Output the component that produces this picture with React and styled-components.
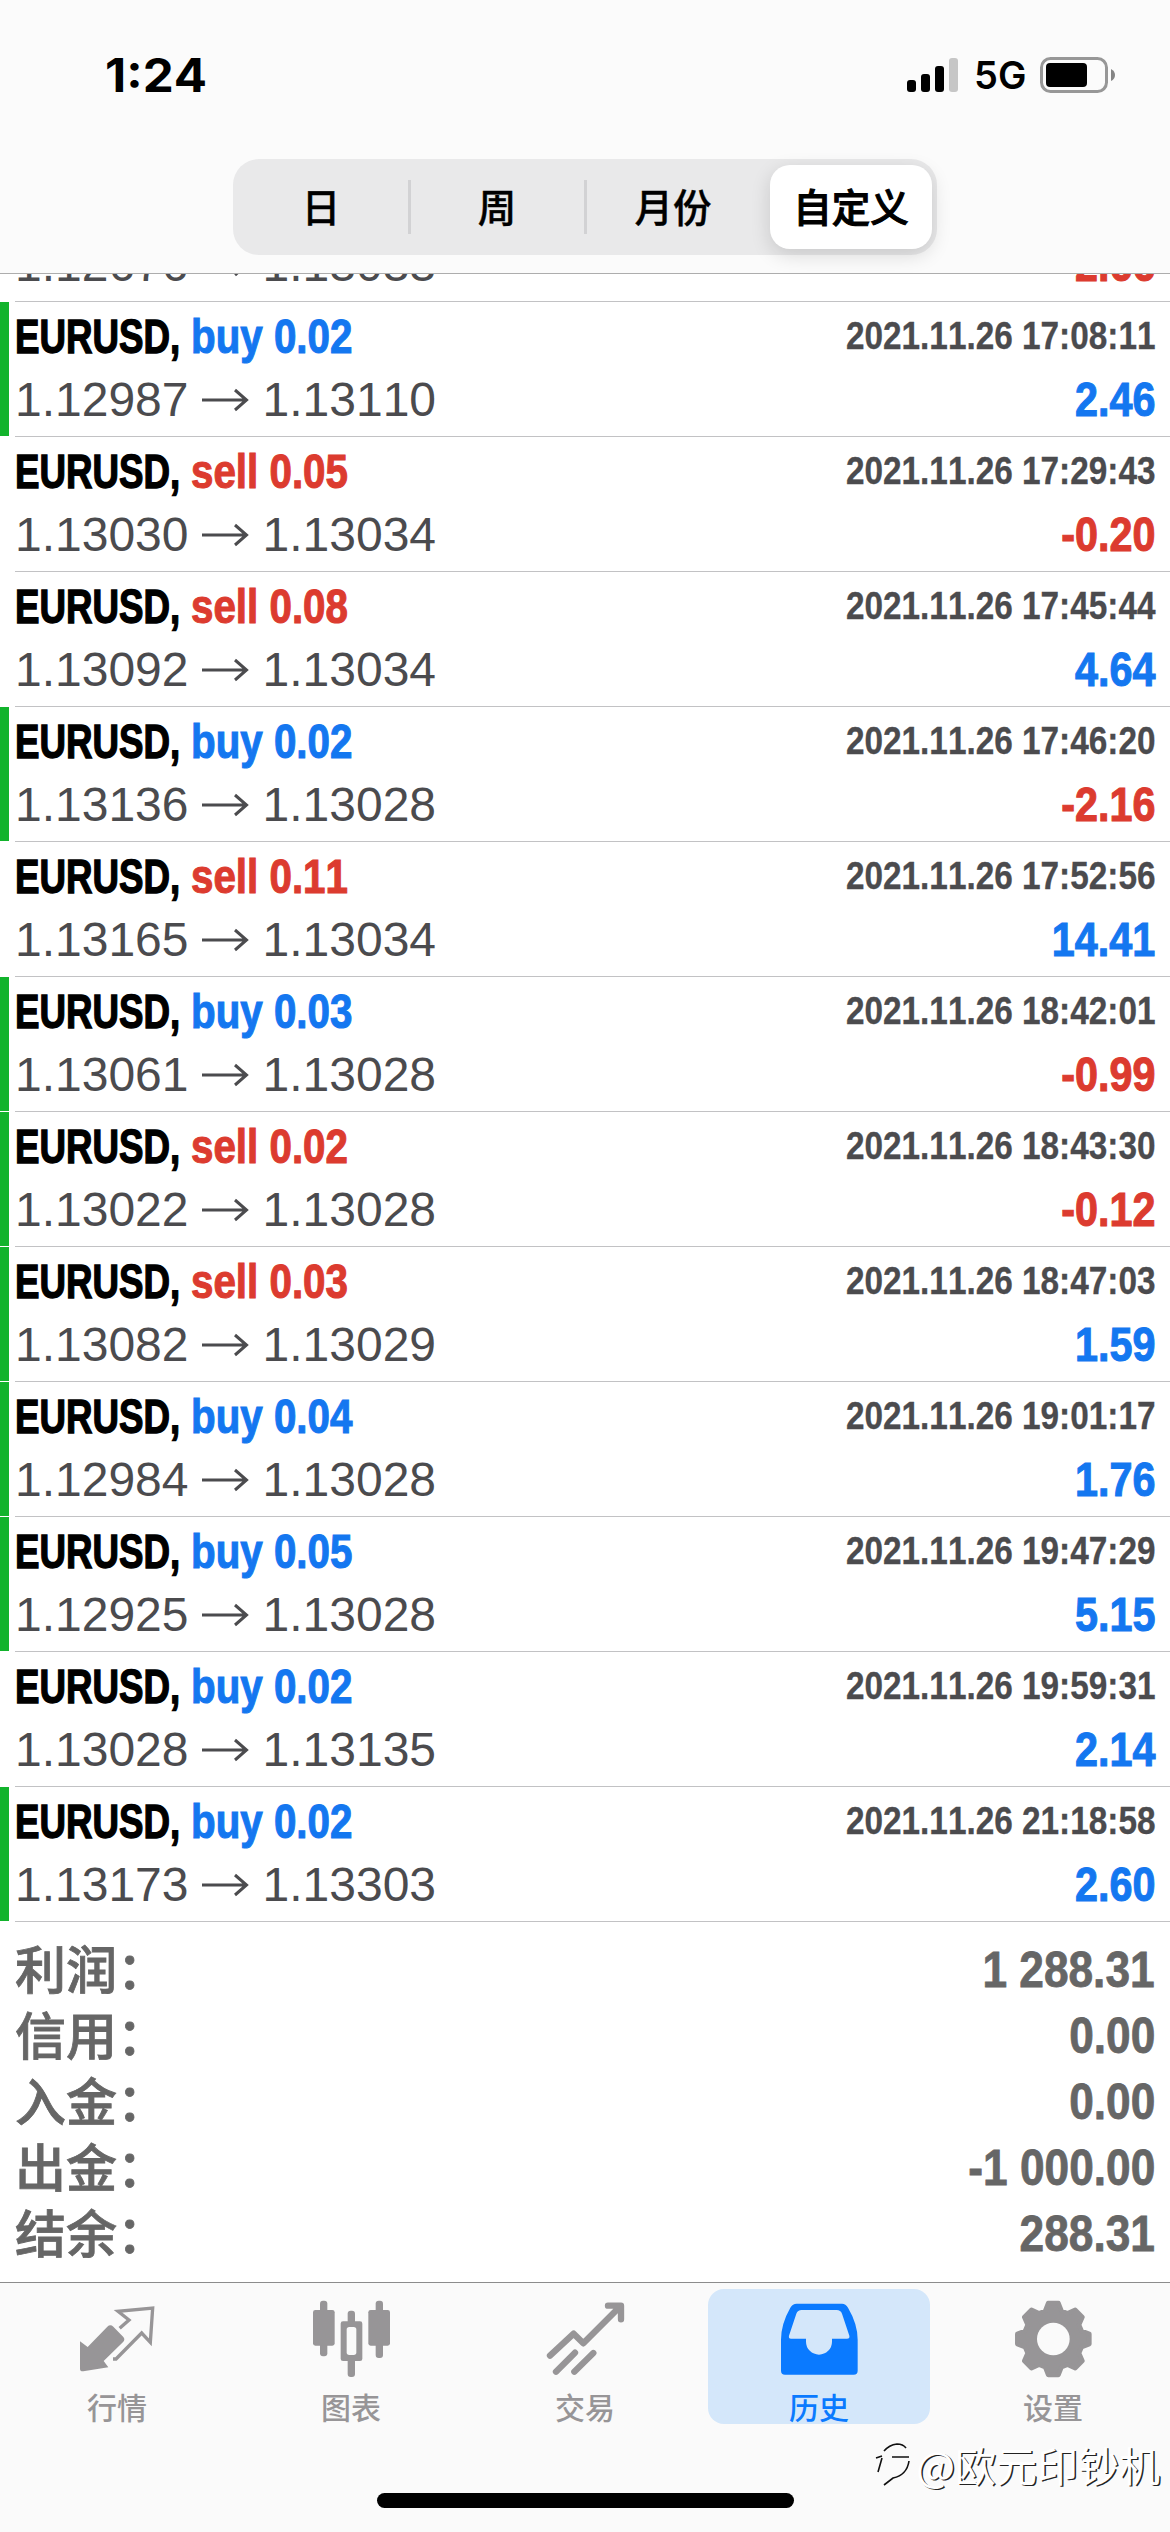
import styled, { createGlobalStyle } from 'styled-components';

const GlobalStyle = createGlobalStyle`
  * {
    box-sizing: border-box;
  }
  body {
    margin: 0;
    background: #ffffff;
    font-family: "Liberation Sans", "Noto Sans CJK SC", sans-serif;
    font-kerning: none;
  }
`;

const BLUE = '#1477f0';
const RED = '#dc3b2f';

const deals = [
  { side: 'sell', volume: '0.03', open: '1.12676', close: '1.13033', time: '2021.11.26 17:02:26', profit: '-2.66' },
  { side: 'buy', volume: '0.02', open: '1.12987', close: '1.13110', time: '2021.11.26 17:08:11', profit: '2.46', flag: true },
  { side: 'sell', volume: '0.05', open: '1.13030', close: '1.13034', time: '2021.11.26 17:29:43', profit: '-0.20' },
  { side: 'sell', volume: '0.08', open: '1.13092', close: '1.13034', time: '2021.11.26 17:45:44', profit: '4.64' },
  { side: 'buy', volume: '0.02', open: '1.13136', close: '1.13028', time: '2021.11.26 17:46:20', profit: '-2.16', flag: true },
  { side: 'sell', volume: '0.11', open: '1.13165', close: '1.13034', time: '2021.11.26 17:52:56', profit: '14.41' },
  { side: 'buy', volume: '0.03', open: '1.13061', close: '1.13028', time: '2021.11.26 18:42:01', profit: '-0.99', flag: true },
  { side: 'sell', volume: '0.02', open: '1.13022', close: '1.13028', time: '2021.11.26 18:43:30', profit: '-0.12', flag: true },
  { side: 'sell', volume: '0.03', open: '1.13082', close: '1.13029', time: '2021.11.26 18:47:03', profit: '1.59', flag: true },
  { side: 'buy', volume: '0.04', open: '1.12984', close: '1.13028', time: '2021.11.26 19:01:17', profit: '1.76', flag: true },
  { side: 'buy', volume: '0.05', open: '1.12925', close: '1.13028', time: '2021.11.26 19:47:29', profit: '5.15', flag: true },
  { side: 'buy', volume: '0.02', open: '1.13028', close: '1.13135', time: '2021.11.26 19:59:31', profit: '2.14' },
  { side: 'buy', volume: '0.02', open: '1.13173', close: '1.13303', time: '2021.11.26 21:18:58', profit: '2.60', flag: true },
];

const totals = [
  ['利润：', '1 288.31'],
  ['信用：', '0.00'],
  ['入金：', '0.00'],
  ['出金：', '-1 000.00'],
  ['结余：', '288.31'],
];

const Screen = styled.div`
  position: relative;
  display: flex;
  flex-direction: column;
  width: 1170px;
  height: 2532px;
  overflow: hidden;
  background: #ffffff;
`;

const Header = styled.header`
  flex: none;
  height: 274px;
  background: #fbfbfb;
  border-bottom: 1px solid #adadad;
`;

const StatusBar = styled.div`
  display: flex;
  align-items: center;
  justify-content: space-between;
  height: 159px;
  padding: 0 54px 10px 105px;
  font-family: Inter, sans-serif;
  color: #000000;
`;

const Clock = styled.span`
  font-size: 46px;
  font-weight: 700;
  transform: scaleX(1.07);
  transform-origin: left;
`;

const StatusIcons = styled.div`
  display: flex;
  align-items: center;
  gap: 16px;
`;

const Network = styled.span`
  width: 50px;
  font-size: 38px;
  font-weight: 600;
  line-height: 40px;
  white-space: nowrap;
`;

const Segments = styled.div`
  display: flex;
  width: 704px;
  height: 96px;
  margin: 0 auto;
  padding: 6px 0;
  border-radius: 26px;
  background: #e9e9ea;
`;

const Segment = styled.div`
  display: flex;
  flex: none;
  align-items: center;
  justify-content: center;
  width: 176px;
  padding-bottom: 4px;
  font-family: "Noto Sans CJK SC", sans-serif;
  font-size: 38.5px;
  font-weight: 500;
  line-height: 56px;
  color: #000000;
  -webkit-text-stroke: 0.4px #000000;

  ${({ $active }) => $active && `
    width: 162px;
    margin: 0 5px 0 9px;
    border-radius: 20px;
    background: #ffffff;
    box-shadow: 0 6px 20px rgba(0, 0, 0, 0.14);
    -webkit-text-stroke: 1px #000000;
  `}
`;

const SegmentLine = styled.i`
  align-self: center;
  width: 3px;
  height: 54px;
  margin: 0 -1.5px;
  background: #d2d2d4;
`;

const History = styled.main`
  display: flex;
  flex: none;
  flex-direction: column;
  justify-content: flex-end;
  height: 1648px;
  overflow: hidden;
`;

const Row = styled.div`
  display: flex;
  flex: none;
  height: 135px;
`;

const Flag = styled.i`
  width: 9px;
  height: 134px;
  margin-right: 6px;
  background: ${({ $on }) => ($on ? '#12b32c' : 'transparent')};
`;

const Deal = styled.div`
  flex: 1;
  padding: 5px 15px 0 0;
  border-bottom: 1px solid #c2c2c4;
`;

const Line = styled.div`
  display: flex;
  align-items: center;
  height: ${({ $height }) => $height}px;
`;

// Condensed bold text: squeezed towards the side it is aligned to
const Condensed = styled.span`
  font-size: ${({ $size = 48 }) => $size}px;
  font-weight: 700;
  line-height: 1;
  white-space: nowrap;
  color: ${({ $color }) => $color};
  -webkit-text-stroke: ${({ $stroke = 1.1 }) => $stroke}px ${({ $color }) => $color};
  transform: scaleX(${({ $scale }) => $scale});
  transform-origin: ${({ $right }) => ($right ? 'right' : 'left')} center;
`;

const SymbolName = styled(Condensed)`
  width: 176px;
`;

const DealTime = styled(Condensed)`
  margin: 0 0 1px auto;
`;

const Profit = styled(Condensed)`
  margin-left: auto;
`;

const Price = styled.span`
  font-size: 48px;
  line-height: 1;
  color: #4b4b4e;
`;

const Arrow = styled.svg`
  width: 48px;
  height: 24px;
  margin: 0 14px 0 12px;
`;

const Totals = styled.section`
  flex: none;
  height: 360px;
  padding: 15px 15px 0;
`;

const TotalLabel = styled.span`
  margin-bottom: 6px;
  font-family: "Noto Sans CJK SC", sans-serif;
  font-size: 51px;
  font-weight: 500;
  line-height: 60px;
  color: #666666;
  -webkit-text-stroke: 0.8px #666666;
`;

const TabBar = styled.footer`
  flex: 1;
  border-top: 1px solid #8c8c8c;
  background: #fafafa;
`;

const Tabs = styled.nav`
  display: flex;
  gap: 12px;
  height: 141px;
  padding: 6px 6px 0;
`;

const Tab = styled.div`
  display: flex;
  flex: 1;
  flex-direction: column;
  align-items: center;
  gap: 9px;
  padding-top: 10px;
  border-radius: 16px;
  background: ${({ $active }) => ($active ? '#d4e7fa' : 'transparent')};
  color: ${({ $active }) => ($active ? '#0a7aff' : '#979597')};
  font-family: "Noto Sans CJK SC", sans-serif;
  font-size: 30px;
  font-weight: 500;
  line-height: 36px;

  svg {
    width: 80px;
    height: 80px;
  }
`;

const HomeIndicator = styled.div`
  width: 417px;
  height: 15px;
  margin: 69px auto 0;
  border-radius: 8px;
  background: #000000;
`;

const Watermark = styled.div`
  position: absolute;
  right: 10px;
  bottom: 38px;
  display: flex;
  align-items: center;
  gap: 3px;
  font-family: "Noto Sans CJK SC", sans-serif;
  font-size: 41px;
  line-height: 60px;
  color: #ffffff;
  text-shadow: 1.5px 1px 0.5px #222222;
`;

function Signal() {
  return (
    <svg width="51" height="34" viewBox="0 0 51 34">
      <rect x="0" y="22" width="9" height="12" rx="3" />
      <rect x="14" y="16" width="9" height="18" rx="3" />
      <rect x="28" y="8" width="9" height="26" rx="3" />
      <rect x="42" y="0" width="9" height="34" rx="3" fill="#c6c6c6" />
    </svg>
  );
}

function Battery() {
  return (
    <svg width="76" height="36" viewBox="0 0 76 36">
      <rect x="1.5" y="1.5" width="65" height="33" rx="9" fill="none" stroke="#979797" strokeWidth="3" />
      <rect x="6" y="6" width="41" height="24" rx="4" />
      <path d="M71 12Q75 14 75 18Q75 22 71 24Z" fill="#858585" />
    </svg>
  );
}

function QuotesIcon() {
  return (
    <svg viewBox="231 88 240 240" fill="currentColor">
      <path d="M240 215L263 232L322 171Q331 163 340 171L370 202Q376 209 370 216L311 274L325 293L250 305Q240 306 240 297Z" />
      <path d="M359 176L387 151L354 125L458 115L451 218L425 190L348 268H339" fill="none" stroke="currentColor" strokeWidth="10" />
    </svg>
  );
}

function ChartIcon() {
  return (
    <svg viewBox="933 88 240 240" fill="currentColor">
      <rect x="960" y="93" width="22" height="167" rx="9" />
      <rect x="939" y="121" width="65" height="107" rx="7" />
      <rect x="1127" y="93" width="22" height="172" rx="9" />
      <rect x="1105" y="121" width="65" height="107" rx="7" />
      <rect x="1043" y="123" width="22" height="199" rx="9" />
      <rect x="1022" y="155" width="65" height="119" rx="7" />
      <rect x="1040" y="172" width="29" height="84" rx="8" fill="#fafafa" />
    </svg>
  );
}

function TradeIcon() {
  return (
    <svg viewBox="285 88 240 240" fill="none" stroke="currentColor" strokeWidth="19" strokeLinecap="round" strokeLinejoin="round">
      <path d="M300 258L371 192L400 221L511 110M474 108H513V149M318 306L375 249M373 306L430 250" />
    </svg>
  );
}

function HistoryIcon() {
  return (
    <svg viewBox="987 88 240 240" fill="currentColor" fillRule="evenodd">
      <path d="M1040 102H1176Q1187 102 1194 114Q1223 163 1223 210V303Q1223 315 1211 315H1005Q993 315 993 303V210Q993 163 1021 114Q1028 102 1040 102ZM1055 121Q1043 121 1039 132L1017 198Q1015 207 1023 207H1068V216A39 39 0 0 0 1146 216V207H1191Q1200 207 1198 198L1176 132Q1172 121 1160 121Z" />
    </svg>
  );
}

const gearPoints = Array.from({ length: 8 }, (_, i) => i * 45)
  .flatMap((a) => [[a - 16, 88], [a - 8, 109], [a + 8, 109], [a + 16, 88]])
  .map(([a, r]) => {
    const rad = (a * Math.PI) / 180;
    return `${(760 + r * Math.cos(rad)).toFixed(1)},${(208 + r * Math.sin(rad)).toFixed(1)}`;
  })
  .join(' ');

function SettingsIcon() {
  return (
    <svg viewBox="639 88 240 240" fill="currentColor">
      <polygon points={gearPoints} stroke="currentColor" strokeWidth="14" strokeLinejoin="round" />
      <circle cx="760" cy="208" r="49" fill="#fafafa" />
    </svg>
  );
}

const tabs = [
  { label: '行情', Icon: QuotesIcon },
  { label: '图表', Icon: ChartIcon },
  { label: '交易', Icon: TradeIcon },
  { label: '历史', Icon: HistoryIcon, active: true },
  { label: '设置', Icon: SettingsIcon },
];

function DealRow({ side, volume, open, close, time, profit, flag }) {
  return (
    <Row>
      <Flag $on={flag} />
      <Deal>
        <Line $height={60}>
          <SymbolName $color="#000000" $scale={0.765} $stroke={1.4}>EURUSD,</SymbolName>
          <Condensed $color={side === 'buy' ? BLUE : RED} $scale={0.84}>{side} {volume}</Condensed>
          <DealTime $color="#4b4b4e" $size={38.5} $scale={0.866} $stroke={0.3} $right>{time}</DealTime>
        </Line>
        <Line $height={65}>
          <Price>{open}</Price>
          <Arrow viewBox="0 0 48 24" fill="none" stroke="#4b4b4e" strokeWidth="3">
            <path d="M1 12H45M34 2L45.500 12L34 22" />
          </Arrow>
          <Price>{close}</Price>
          <Profit $color={profit.startsWith('-') ? RED : BLUE} $scale={0.86} $right>{profit}</Profit>
        </Line>
      </Deal>
    </Row>
  );
}

function App() {
  return (
    <Screen>
      <GlobalStyle />
      <Header>
        <StatusBar>
          <Clock>1:24</Clock>
          <StatusIcons>
            <Signal />
            <Network>5G</Network>
            <Battery />
          </StatusIcons>
        </StatusBar>
        <Segments>
          <Segment>日</Segment>
          <SegmentLine />
          <Segment>周</Segment>
          <SegmentLine />
          <Segment>月份</Segment>
          <Segment $active>自定义</Segment>
        </Segments>
      </Header>

      <History>
        {deals.map((deal) => (
          <DealRow key={deal.time} {...deal} />
        ))}
      </History>

      <Totals>
        {totals.map(([label, value]) => (
          <Line key={label} $height={66}>
            <TotalLabel>{label}</TotalLabel>
            <Profit $color="#666666" $size={50} $scale={0.885} $stroke={0.8} $right>{value}</Profit>
          </Line>
        ))}
      </Totals>

      <TabBar>
        <Tabs>
          {tabs.map(({ label, Icon, active }) => (
            <Tab key={label} $active={active}>
              <Icon />
              {label}
            </Tab>
          ))}
        </Tabs>
        <HomeIndicator />
      </TabBar>

      <Watermark>
        <svg width="38" height="46" viewBox="0 0 38 46" fill="none" stroke="#111111" strokeWidth="1.6">
          <path d="M1 17L7 15M9 10Q14 4 22 3Q28 3 31 7M7 17L3 31M17 16H34M34 20Q32 34 18 37L9 44" />
        </svg>
        @欧元印钞机
      </Watermark>
    </Screen>
  );
}

export default App;
